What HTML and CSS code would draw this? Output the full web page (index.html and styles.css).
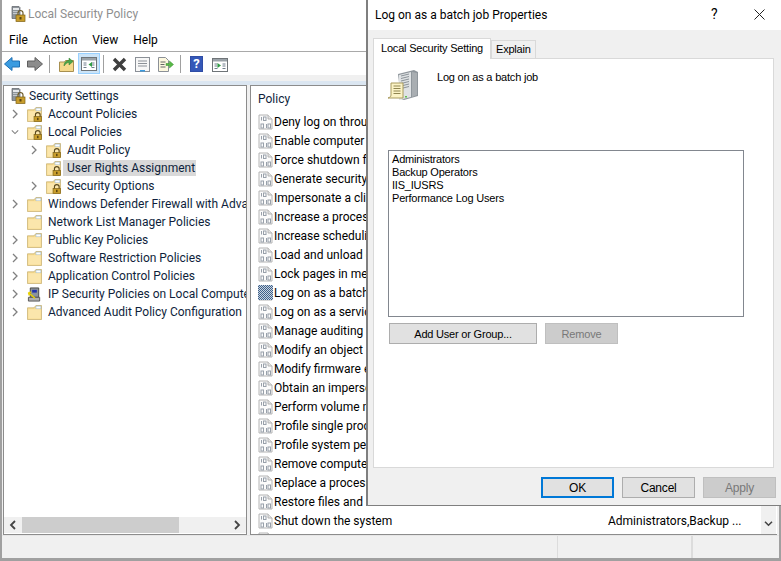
FILE: index.html
```html
<!DOCTYPE html>
<html lang="en">
<head>
<meta charset="utf-8">
<title>Local Security Policy</title>
<link rel="stylesheet" href="styles.css">
</head>
<body>
<svg class="defs" width="0" height="0">
  <defs>
    <symbol id="srv" viewBox="0 0 16 16">
      <path d="M2 0.500h7l1 1v11H2z" fill="#8d949a" stroke="#5c6066" stroke-width=".7"/>
      <path d="M3 2h6v2H3z" fill="#e6e8ea"/><path d="M3 5h6v1H3zM3 7h6v1H3z" fill="#c4c8cc"/>
      <rect x="6" y="9" width="9" height="6.500" fill="#c89d2c" stroke="#7e6114" stroke-width=".7"/>
      <path d="M8 9V7a2.500 2.500 0 0 1 5 0v2" fill="none" stroke="#6d5a28" stroke-width="1.200"/>
      <rect x="9.500" y="11" width="2" height="2.500" fill="#5a4510"/>
    </symbol>
    <symbol id="folder" viewBox="0 0 16 16">
      <path d="M.5 3V15.500h15V.5H9.500L7.500 3z" fill="#f8dc8f" stroke="#c8b070" stroke-width=".8"/>
      <path d="M9.500 1.200h5.300v2.800H9.500z" fill="#fff" stroke="#7fa9cf" stroke-width=".5"/>
      <path d="M1.500 4.500h13v10h-13z" fill="#fbe6ac"/>
    </symbol>
    <symbol id="lockfolder" viewBox="0 0 16 16">
      <use href="#folder"/>
      <rect x="7.500" y="10" width="8" height="5.500" fill="#c89d2c" stroke="#7e6114" stroke-width=".7"/>
      <path d="M9 10V8.200a2.500 2.200 0 0 1 5 0V10" fill="none" stroke="#5d4c20" stroke-width="1.200"/>
      <rect x="10.700" y="11.500" width="1.600" height="2.500" fill="#5a4510"/>
    </symbol>
    <symbol id="policy" viewBox="0 0 15 16">
      <path d="M1 1h9l4 4v10H1z" fill="#fbfbfb" stroke="#b4b4b4"/>
      <path d="M10 1v4h4" fill="#e3e3e3" stroke="#b4b4b4"/>
      <path d="M3.500 3v3.500M8.500 10v4" stroke="#98a0aa" stroke-width="1"/>
      <rect x="5.500" y="3" width="2.500" height="3.500" fill="none" stroke="#98a0aa"/>
      <rect x="3" y="10" width="2.500" height="4" fill="none" stroke="#98a0aa"/>
      <rect x="10" y="10" width="2.500" height="4" fill="none" stroke="#98a0aa"/>
    </symbol>
    <symbol id="win" viewBox="0 0 16 14">
      <rect x=".5" y=".5" width="15" height="13" fill="#fff" stroke="#6f7478"/>
      <path d="M1 1h14v2.500H1z" fill="#9aa2a8"/>
      <path d="M2.500 6h3M2.500 8h3M2.500 10.500h3M10.500 6h3M10.500 8h3M10.500 10.500h3" stroke="#6f7d8c"/>
    </symbol>
  </defs>
</svg>

<div class="app">
  <header class="titlebar">
    <svg class="ico16"><use href="#srv"/></svg>
    <span class="apptitle">Local Security Policy</span>
  </header>
  <nav class="menubar">
    <span>File</span><span>Action</span><span>View</span><span>Help</span>
  </nav>
  <div class="toolbar">
    <svg class="tb tb-back" viewBox="0 0 16 14"><path d="M8 .5L.5 7 8 13.500V10h7.500V4H8z" fill="#3a9be0" stroke="#1f70b4"/></svg>
    <svg class="tb tb-fwd" viewBox="0 0 16 14"><path d="M8 .5L15.500 7 8 13.500V10H.5V4H8z" fill="#8c8c8c" stroke="#5f5f5f"/></svg>
    <i class="sep sep1"></i>
    <svg class="tb tb-up" viewBox="0 0 15 15"><path d="M.5 5h5l1-1.500h8V14.500H.5z" fill="#f5d98c" stroke="#a89050"/><path d="M5 9C5 5 7.500 3.500 10 3.500V1l4 3.500L10 8V5.500C8 5.500 6.500 7 5 9z" fill="#4ca64c" stroke="#2d7d2d" stroke-width=".5"/></svg>
    <span class="tb-active"><svg class="tb-in" viewBox="0 0 16 14"><use href="#win"/><path d="M11 5l-3.500 2.500L11 10z" fill="#2f9e44"/></svg></span>
    <i class="sep sep2"></i>
    <svg class="tb tb-x" viewBox="0 0 15 15"><path d="M2 2l11 11M13 2L2 13" stroke="#3f3f3f" stroke-width="3.400"/></svg>
    <svg class="tb tb-prop" viewBox="0 0 15 15"><rect x=".5" y=".5" width="14" height="14" fill="#f7f7f7" stroke="#8b9097"/><path d="M3 4h9M3 6.500h9M3 9h9" stroke="#8b9097"/><path d="M5 13h5v1.500H5z" fill="#3a9be0"/></svg>
    <svg class="tb tb-exp" viewBox="0 0 16 15"><path d="M.5.500h7l3 3v11H.5z" fill="#fdf8df" stroke="#8b9097"/><path d="M2.500 5h5M2.500 7.500h4M2.500 10h5" stroke="#666"/><path d="M8 6.500h3.500V4l4 3.500-4 3.500V8.500H8z" fill="#58b947" stroke="#3d8f30" stroke-width=".5"/></svg>
    <i class="sep sep3"></i>
    <svg class="tb tb-help" viewBox="0 0 13 16"><rect width="13" height="16" fill="#2f4da6"/><path d="M1 1h11v14H1z" fill="#3558b8"/></svg>
    <span class="helpq">?</span>
    <svg class="tb tb-act" viewBox="0 0 16 14"><use href="#win"/><path d="M5.500 5l3.500 2.500L5.500 10z" fill="#2f9e44"/></svg>
  </div>
  <div class="band"></div>

  <main class="panes">
    <section class="tree">
      <ul class="treelist">
        <li class="lv0 noarrow rootrow"><svg class="ico16"><use href="#srv"/></svg><span>Security Settings</span></li>
        <li class="lv1"><svg class="chev" viewBox="0 0 8 10"><path d="M2 1l4 4-4 4"/></svg><svg class="ico15"><use href="#lockfolder"/></svg><span>Account Policies</span></li>
        <li class="lv1"><svg class="chev" viewBox="0 0 10 8"><path d="M1 2l4 4 4-4"/></svg><svg class="ico15"><use href="#lockfolder"/></svg><span>Local Policies</span></li>
        <li class="lv2"><svg class="chev" viewBox="0 0 8 10"><path d="M2 1l4 4-4 4"/></svg><svg class="ico15"><use href="#lockfolder"/></svg><span>Audit Policy</span></li>
        <li class="lv2"><i class="chev"></i><svg class="ico15"><use href="#lockfolder"/></svg><span class="selected">User Rights Assignment</span></li>
        <li class="lv2"><svg class="chev" viewBox="0 0 8 10"><path d="M2 1l4 4-4 4"/></svg><svg class="ico15"><use href="#lockfolder"/></svg><span>Security Options</span></li>
        <li class="lv1"><svg class="chev" viewBox="0 0 8 10"><path d="M2 1l4 4-4 4"/></svg><svg class="ico15"><use href="#folder"/></svg><span>Windows Defender Firewall with Advanced Security</span></li>
        <li class="lv1"><i class="chev"></i><svg class="ico15"><use href="#folder"/></svg><span>Network List Manager Policies</span></li>
        <li class="lv1"><svg class="chev" viewBox="0 0 8 10"><path d="M2 1l4 4-4 4"/></svg><svg class="ico15"><use href="#folder"/></svg><span>Public Key Policies</span></li>
        <li class="lv1"><svg class="chev" viewBox="0 0 8 10"><path d="M2 1l4 4-4 4"/></svg><svg class="ico15"><use href="#folder"/></svg><span>Software Restriction Policies</span></li>
        <li class="lv1"><svg class="chev" viewBox="0 0 8 10"><path d="M2 1l4 4-4 4"/></svg><svg class="ico15"><use href="#folder"/></svg><span>Application Control Policies</span></li>
        <li class="lv1"><svg class="chev" viewBox="0 0 8 10"><path d="M2 1l4 4-4 4"/></svg><svg class="ico15" viewBox="0 0 15 16"><path d="M3 1h9v10H3z" fill="#8d949a" stroke="#444"/><path d="M5 3h5v3H5z" fill="#2233aa"/><path d="M1 11h12v4H1z" fill="#b0b0b0" stroke="#555"/><path d="M1 6l7 6M1 6l1 3M1 6l3-.5" stroke="#e8d000" stroke-width="1.500" fill="none"/></svg><span>IP Security Policies on Local Computer</span></li>
        <li class="lv1"><svg class="chev" viewBox="0 0 8 10"><path d="M2 1l4 4-4 4"/></svg><svg class="ico15"><use href="#folder"/></svg><span>Advanced Audit Policy Configuration</span></li>
      </ul>
      <div class="hscroll">
        <svg class="sbtn" viewBox="0 0 8 10"><path d="M6 1L2 5l4 4"/></svg>
        <div class="htrack"><div class="hthumb"></div></div>
        <svg class="sbtn" viewBox="0 0 8 10"><path d="M2 1l4 4-4 4"/></svg>
      </div>
    </section>
    <section class="list">
      <div class="listbody">
        <div class="listhead">Policy</div>
        <ul class="rows">
          <li><svg class="ico-p"><use href="#policy"/></svg><span>Deny log on through Remote Desktop Services</span></li>
          <li><svg class="ico-p"><use href="#policy"/></svg><span>Enable computer and user accounts</span></li>
          <li><svg class="ico-p"><use href="#policy"/></svg><span>Force shutdown from a remote system</span></li>
          <li><svg class="ico-p"><use href="#policy"/></svg><span>Generate security audits</span></li>
          <li><svg class="ico-p"><use href="#policy"/></svg><span>Impersonate a client after authentication</span></li>
          <li><svg class="ico-p"><use href="#policy"/></svg><span>Increase a process working set</span></li>
          <li><svg class="ico-p"><use href="#policy"/></svg><span>Increase scheduling priority</span></li>
          <li><svg class="ico-p"><use href="#policy"/></svg><span>Load and unload device drivers</span></li>
          <li><svg class="ico-p"><use href="#policy"/></svg><span>Lock pages in memory</span></li>
          <li class="current"><svg class="ico-p"><use href="#policy"/></svg><i class="dither"></i><span>Log on as a batch job</span></li>
          <li><svg class="ico-p"><use href="#policy"/></svg><span>Log on as a service</span></li>
          <li><svg class="ico-p"><use href="#policy"/></svg><span>Manage auditing and security log</span></li>
          <li><svg class="ico-p"><use href="#policy"/></svg><span>Modify an object label</span></li>
          <li><svg class="ico-p"><use href="#policy"/></svg><span>Modify firmware environment values</span></li>
          <li><svg class="ico-p"><use href="#policy"/></svg><span>Obtain an impersonation token</span></li>
          <li><svg class="ico-p"><use href="#policy"/></svg><span>Perform volume maintenance tasks</span></li>
          <li><svg class="ico-p"><use href="#policy"/></svg><span>Profile single process</span></li>
          <li><svg class="ico-p"><use href="#policy"/></svg><span>Profile system performance</span></li>
          <li><svg class="ico-p"><use href="#policy"/></svg><span>Remove computer from docking station</span></li>
          <li><svg class="ico-p"><use href="#policy"/></svg><span>Replace a process level token</span></li>
          <li><svg class="ico-p"><use href="#policy"/></svg><span>Restore files and directories</span></li>
          <li><svg class="ico-p"><use href="#policy"/></svg><span class="name">Shut down the system</span><span class="val">Administrators,Backup ...</span></li>
          <li><svg class="ico-p"><use href="#policy"/></svg><span></span></li>
        </ul>
      </div>
      <div class="vscroll"><svg class="vdown" viewBox="0 0 10 8"><path d="M1 2l4 4 4-4"/></svg></div>
    </section>
  </main>
  <footer class="status"><i class="cell c1"></i><i class="cell c2"></i><i class="cell c3"></i></footer>
</div>

<div class="dialog">
  <div class="dlgtitle">
    <span class="dlgname">Log on as a batch job Properties</span>
    <span class="dlghelp">?</span>
    <svg class="dlgclose" viewBox="0 0 11 11"><path d="M.5.500l10 10M10.500.500l-10 10" stroke="#222" fill="none"/></svg>
  </div>
  <div class="dlgbody">
    <div class="tabs">
      <span class="tab active">Local Security Setting</span>
      <span class="tab">Explain</span>
    </div>
    <div class="page">
      <div class="pagehead">
        <svg class="bigicon" viewBox="0 0 30 32">
          <path d="M10 5L26 1l4 2v24l-14 4-3-1z" fill="#8f969c"/>
          <path d="M11 6l12-3v25l-12 3z" fill="#dfe2e4"/>
          <path d="M13 7l8-2M13 9.500l8-2M13 12l8-2M13 14.500l8-2M13 17l8-2M13 19.500l8-2" stroke="#8b9298"/>
          <path d="M24 3l5 1v22l-5 2z" fill="#a9aeb2"/>
          <rect x="17" y="27" width="2" height="1.500" fill="#5fbf4f"/>
          <path d="M3 14h12v15H0c2-1 3-1 3-3z" fill="#fbf3c6" stroke="#a89a5c"/>
          <path d="M5.500 17h7M5.500 19.500h7M5.500 22h7M5.500 24.500h7" stroke="#8f8550"/>
        </svg>
        <span class="pagetext">Log on as a batch job</span>
      </div>
      <div class="members">
        <div>Administrators</div>
        <div>Backup Operators</div>
        <div>IIS_IUSRS</div>
        <div>Performance Log Users</div>
      </div>
      <div class="pagebtns">
        <button class="btn add" type="button">Add User or Group...</button>
        <button class="btn remove" type="button">Remove</button>
      </div>
    </div>
    <div class="dlgbtns">
      <button class="btn ok" type="button">OK</button>
      <button class="btn cancel" type="button">Cancel</button>
      <button class="btn apply" type="button">Apply</button>
    </div>
  </div>
</div>
</body>
</html>
```

FILE: styles.css
```css
* { box-sizing: border-box; }
html, body { margin: 0; padding: 0; width: 781px; height: 561px; overflow: hidden; }
body { position: relative; background: #a0a0a0; font-family: Roboto, "Noto Sans", sans-serif; font-size: 12px; color: #000; }
ul { list-style: none; margin: 0; padding: 0; }
i { display: block; }
.defs { position: absolute; }
svg { display: block; flex: none; }

.app { width: 781px; height: 561px; display: flex; flex-direction: column; padding: 0 3px 3px 3px; background: #a0a0a0; }
.titlebar { height: 28px; margin: 0 -1px; background: #fff; display: flex; align-items: center; padding-left: 8px; gap: 2px; flex: none; }
.apptitle { color: #8f8f8f; font-size: 12px; }
.ico16 { width: 16px; height: 16px; }
.menubar { height: 24px; margin: 0 -1px; background: #fff; display: flex; align-items: center; padding-left: 7px; gap: 15px; flex: none; border-bottom: 1px solid #a9a9a9; }
.toolbar { position: relative; height: 23px; margin: 0 -1px; background: #fff; flex: none; display: flex; align-items: center; }
.tb { position: absolute; }
.tb-back { left: 2px; top: 5px; width: 16px; height: 14px; }
.tb-fwd { left: 25px; top: 5px; width: 16px; height: 14px; }
.sep { position: absolute; top: 3px; width: 1px; height: 18px; background: #a0a0a0; }
.sep1 { left: 47px; } .sep2 { left: 101px; } .sep3 { left: 178px; }
.tb-up { left: 57px; top: 5px; width: 15px; height: 15px; }
.tb-active { position: absolute; left: 76px; top: 1px; width: 22px; height: 21px; background: #cce4f7; border: 1px solid #99d1ff; display: flex; align-items: center; justify-content: center; }
.tb-in { width: 16px; height: 14px; }
.tb-x { left: 110px; top: 5px; width: 15px; height: 15px; }
.tb-prop { left: 133px; top: 5px; width: 15px; height: 15px; }
.tb-exp { left: 156px; top: 5px; width: 16px; height: 15px; }
.tb-help { left: 188px; top: 4px; width: 13px; height: 16px; }
.helpq { position: absolute; left: 188px; top: 3px; width: 13px; text-align: center; color: #fff; font-weight: 700; font-size: 13px; line-height: 17px; }
.tb-act { left: 210px; top: 6px; width: 16px; height: 14px; }
.band { height: 10px; margin: 0 -1px; flex: none; background: linear-gradient(#f0f0f0 0 6px, #dbe6f1 6px); }

.panes { flex: 1; display: flex; gap: 3px; min-height: 0; background: #f0f0f0; margin: 0 -1px; padding: 0 2px 0 1px; }
.tree { width: 244px; flex: none; display: flex; flex-direction: column; background: #fff; border: 1px solid #8c8c8c; overflow: hidden; }
.treelist { flex: 1; overflow: hidden; padding-top: 1px; }
.treelist li { height: 18px; display: flex; align-items: center; white-space: nowrap; }
.rootrow { padding-left: 6px; gap: 3px; }
.lv1 { padding-left: 7px; }
.lv2 { padding-left: 26px; }
.chev { width: 8px; height: 10px; margin-right: 8px; flex: none; fill: none; stroke: #808080; stroke-width: 1.300; overflow: visible; }
.ico15 { width: 15px; height: 15px; margin-right: 6px; flex: none; }
.selected { background: #d9d9d9; margin-left: -4px; padding: 0 1px 0 4px; height: 16px; line-height: 16px; }
.treelist span { color: #0f1f3c; }
.hscroll { height: 16px; background: #f0f0f0; display: flex; align-items: center; margin-bottom: 1px; flex: none; }
.sbtn { width: 8px; height: 10px; margin: 0 5px; fill: none; stroke: #444; stroke-width: 1.800; }
.htrack { flex: 1; height: 16px; }
.hthumb { width: 157px; height: 16px; background: #cdcdcd; }

.list { flex: 1; min-width: 0; display: flex; background: #fff; border: 1px solid #8c8c8c; border-right: 0; position: relative; overflow: hidden; }
.listbody { flex: 1; min-width: 0; overflow: hidden; padding-left: 7px; }
.listhead { height: 26px; line-height: 27px; color: #0f1f3c; }
.rows li { position: relative; height: 19px; display: flex; align-items: center; white-space: nowrap; }
.ico-p { width: 15px; height: 16px; margin-right: 1px; flex: none; }
.dither { position: absolute; left: 0; top: 2px; width: 15px; height: 15px; background: repeating-conic-gradient(#3f608a 0 25%, #c8d4e0 0 50%) 0 0 / 2px 2px; }
.name { flex: none; width: 334px; }
.val { flex: none; }
.vscroll { width: 15px; flex: none; margin-right: 1px; background: #f0f0f0; position: relative; }
.vdown { position: absolute; left: 3px; bottom: 7px; width: 9px; height: 7px; fill: none; stroke: #444; stroke-width: 1.800; }
.status { height: 23px; flex: none; background: #f0f0f0; margin: 0 -1px; display: flex; border-top: 1px solid #e6e6e6; }
.cell { height: 100%; border-right: 1px solid #dcdcdc; }
.c1 { width: 556px; } .c2 { width: 134px; }

.dialog { position: absolute; left: 366px; top: 0; width: 415px; height: 506px; background: #f0f0f0; border-left: 2px solid #7f7f7f; border-bottom: 1px solid #7f7f7f; display: flex; flex-direction: column; font-family: "Liberation Sans", Arial, sans-serif; font-size: 11px; }
.dlgtitle { height: 30px; background: #fff; display: flex; align-items: center; padding-left: 7px; position: relative; flex: none; font-family: Roboto, sans-serif; font-size: 12px; }
.dlgname { flex: 1; }
.dlghelp { position: absolute; left: 343px; top: 6px; font-size: 14px; }
.dlgclose { position: absolute; left: 386px; top: 9px; width: 11px; height: 11px; }
.dlgbody { flex: 1; display: flex; flex-direction: column; padding: 7px 5px 0 5px; min-height: 0; }
.tabs { display: flex; align-items: flex-end; height: 21px; flex: none; position: relative; z-index: 1; }
.tab { display: block; height: 18px; line-height: 17px; padding: 0 4px; background: #f0f0f0; border: 1px solid #d9d9d9; border-bottom: 0; letter-spacing: -.2px; }
.tab.active { height: 21px; line-height: 18px; padding: 0 7px; background: #fff; margin-bottom: -1px; }
.page { height: 410px; background: #fff; border: 1px solid #d9d9d9; padding: 10px 29px 0 14px; flex: none; width: 401px; }
.pagehead { height: 81px; display: flex; align-items: flex-start; }
.bigicon { width: 30px; height: 32px; }
.pagetext { margin-left: 19px; margin-top: 2px; letter-spacing: -.2px; }
.members { height: 167px; border: 1px solid #82878f; padding: 2px 3px; line-height: 13px; letter-spacing: -.2px; }
.pagebtns { display: flex; gap: 8px; margin-top: 6px; padding-left: 1px; }
.btn { font: inherit; height: 21px; padding: 0; background: #e1e1e1; border: 1px solid #adadad; color: #000; letter-spacing: -.2px; }
.add { width: 148px; }
.remove { width: 73px; background: #cccccc; border-color: #bfbfbf; color: #787878; }
.dlgbtns { display: flex; justify-content: flex-end; gap: 8px; margin-top: 9px; padding-right: 0; }
.ok, .cancel, .apply { width: 73px; font-size: 12px; }
.ok { border: 2px solid #0078d7; }
.apply { background: #cccccc; border-color: #bfbfbf; color: #787878; }
```
